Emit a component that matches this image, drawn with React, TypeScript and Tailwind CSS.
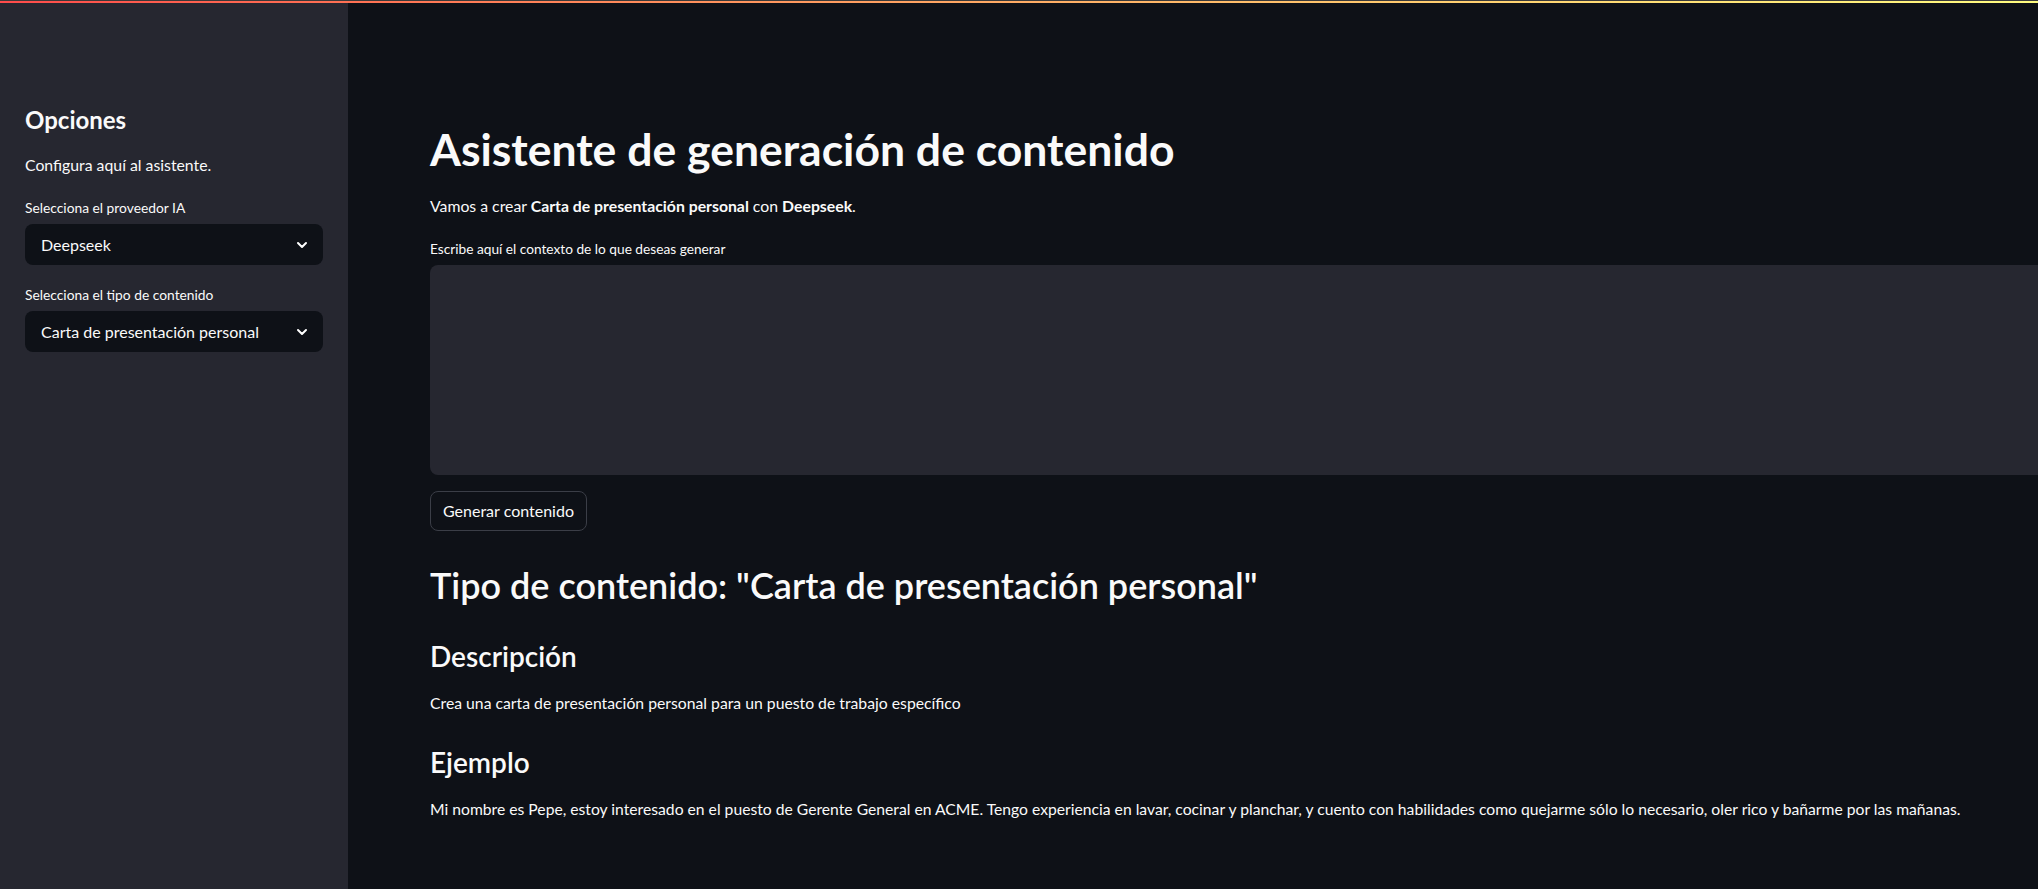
import { ChevronDown } from 'lucide-react';

const font = { fontFamily: 'Lato, "Noto Sans", sans-serif' };

function SelectBox({ value }: { value: string }) {
  return (
    <div className="flex h-[41px] w-full items-center justify-between rounded-lg bg-[#0e1117] pl-4 pr-[13px] text-[16px] text-[#fafafa]">
      <span>{value}</span>
      <ChevronDown className="h-4 w-4 text-white" strokeWidth={3} />
    </div>
  );
}

export default function App() {
  return (
    <div className="flex h-[889px] w-full overflow-hidden bg-[#0e1117] text-[#fafafa]" style={font}>
      {/* top decoration line */}
      <div className="absolute left-0 right-0 top-0 z-10 h-[3px] border-t border-[#3a3a3a] bg-gradient-to-r from-[#ff4b4b] to-[#fffd80]" />

      {/* Sidebar */}
      <aside className="flex h-full w-[348px] shrink-0 flex-col bg-[#262730] px-[25px] pt-[105px]">
        <h2 className="text-[24px] font-bold leading-[29px]">Opciones</h2>
        <p className="mt-[19px] text-[15.8px] leading-6">Configura aquí al asistente.</p>
        <label className="mt-[21px] text-[13.8px] leading-5">Selecciona el proveedor IA</label>
        <div className="mt-[6px]">
          <SelectBox value="Deepseek" />
        </div>
        <label className="mt-[20px] text-[13.8px] leading-5">Selecciona el tipo de contenido</label>
        <div className="mt-[6px]">
          <SelectBox value="Carta de presentación personal" />
        </div>
      </aside>

      {/* Main */}
      <main className="flex min-w-0 flex-1 flex-col pl-[82px] pt-[122px]">
        <h1 className="text-[44.5px] font-bold leading-[53px]">Asistente de generación de contenido</h1>
        <p className="mt-[19px] text-[15.8px] leading-6">
          Vamos a crear <strong className="font-bold">Carta de presentación personal</strong> con{' '}
          <strong className="font-bold">Deepseek</strong>.
        </p>
        <label className="mt-[21px] text-[13.7px] leading-5">Escribe aquí el contexto de lo que deseas generar</label>
        <div className="mt-[6px] h-[210px] w-[1700px] shrink-0 rounded-lg bg-[#262730]" />
        <div className="mt-[16px]">
          <button className="h-10 rounded-lg border border-[#3b3e47] bg-[#0e1117] px-[12px] text-[16px] text-[#fafafa]">
            Generar contenido
          </button>
        </div>
        <h2 className="mt-[33px] text-[36px] font-semibold leading-[43px]">
          Tipo de contenido: "Carta de presentación personal"
        </h2>
        <h3 className="mt-[32px] text-[28px] font-semibold leading-[34px]">Descripción</h3>
        <p className="mt-[18px] text-[15.75px] leading-6">Crea una carta de presentación personal para un puesto de trabajo específico</p>
        <h3 className="mt-[30px] text-[28px] font-semibold leading-[34px]">Ejemplo</h3>
        <p className="mt-[18px] text-[15.7px] leading-6">
          Mi nombre es Pepe, estoy interesado en el puesto de Gerente General en ACME. Tengo experiencia en lavar, cocinar y planchar, y cuento con habilidades como quejarme sólo lo necesario, oler rico y bañarme por las mañanas.
        </p>
      </main>
    </div>
  );
}
